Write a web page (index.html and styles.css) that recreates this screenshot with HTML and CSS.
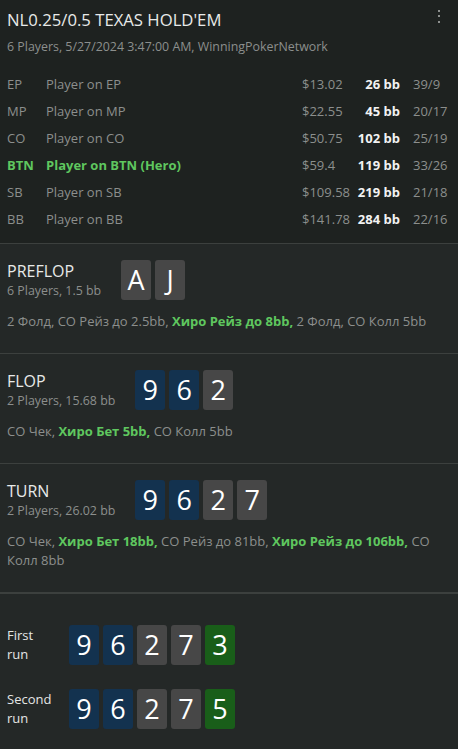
FILE: index.html
```html
<!DOCTYPE html>
<html lang="ru">
<head>
  <meta charset="UTF-8" />
  <meta name="viewport" content="width=device-width, initial-scale=1" />
  <title>NL0.25/0.5 Texas Hold'em</title>
  <link rel="stylesheet" href="styles.css">
</head>
<body>

  <header class="hand-head">
    <div class="title-row">
      <h1>NL0.25/0.5 TEXAS HOLD'EM</h1>
      <svg class="menu" width="6" height="16" viewBox="0 0 6 16">
        <rect x="2" y="2" width="2" height="2" fill="#8d908e"/>
        <rect x="2" y="7" width="2" height="2" fill="#8d908e"/>
        <rect x="2" y="13" width="2" height="2" fill="#8d908e"/>
      </svg>
    </div>
    <p class="meta">6 Players, 5/27/2024 3:47:00 AM, WinningPokerNetwork</p>

    <div class="players">
      <div class="player"><span>EP</span><span>Player on EP</span><span>$13.02</span><b>26 bb</b><span>39/9</span></div>
      <div class="player"><span>MP</span><span>Player on MP</span><span>$22.55</span><b>45 bb</b><span>20/17</span></div>
      <div class="player"><span>CO</span><span>Player on CO</span><span>$50.75</span><b>102 bb</b><span>25/19</span></div>
      <div class="player hero"><span>BTN</span><span>Player on BTN (Hero)</span><span>$59.4</span><b>119 bb</b><span>33/26</span></div>
      <div class="player"><span>SB</span><span>Player on SB</span><span>$109.58</span><b>219 bb</b><span>21/18</span></div>
      <div class="player"><span>BB</span><span>Player on BB</span><span>$141.78</span><b>284 bb</b><span>22/16</span></div>
    </div>
  </header>

  <section class="street">
    <div class="street-top">
      <div>
        <h2>PREFLOP</h2>
        <p class="meta">6 Players, 1.5 bb</p>
      </div>
      <div class="cards">
        <span class="card">A</span><span class="card">J</span>
      </div>
    </div>
    <p class="actions">2 Фолд, CO Рейз до 2.5bb, <b class="hero-act">Хиро Рейз до 8bb,</b> 2 Фолд, CO Колл 5bb</p>
  </section>

  <section class="street">
    <div class="street-top">
      <div>
        <h2>FLOP</h2>
        <p class="meta">2 Players, 15.68 bb</p>
      </div>
      <div class="cards">
        <span class="card blue">9</span><span class="card blue">6</span><span class="card">2</span>
      </div>
    </div>
    <p class="actions">CO Чек, <b class="hero-act">Хиро Бет 5bb,</b> CO Колл 5bb</p>
  </section>

  <section class="street">
    <div class="street-top">
      <div>
        <h2>TURN</h2>
        <p class="meta">2 Players, 26.02 bb</p>
      </div>
      <div class="cards">
        <span class="card blue">9</span><span class="card blue">6</span><span class="card">2</span><span class="card">7</span>
      </div>
    </div>
    <p class="actions">CO Чек, <b class="hero-act">Хиро Бет 18bb,</b> CO Рейз до 81bb, <b class="hero-act">Хиро Рейз до 106bb,</b> CO Колл 8bb</p>
  </section>

  <section class="runs">
    <div class="run">
      <span class="run-label">First<br>run</span>
      <div class="cards">
        <span class="card blue">9</span><span class="card blue">6</span><span class="card">2</span><span class="card">7</span><span class="card green">3</span>
      </div>
    </div>
    <div class="run">
      <span class="run-label">Second<br>run</span>
      <div class="cards">
        <span class="card blue">9</span><span class="card blue">6</span><span class="card">2</span><span class="card">7</span><span class="card green">5</span>
      </div>
    </div>
  </section>

</body>
</html>
```

FILE: styles.css
```css
body {
  margin: 0;
  min-height: 749px;
  background: #242827;
  color: #e4e6e5;
  font-family: "Open Sans", "Liberation Sans", sans-serif;
  font-size: 13px;
}

p, h1, h2 {
  margin: 0;
}

.hand-head {
  background: #1e2220;
  padding: 8px 7px 11px;
  border-bottom: 1px solid #3c403e;
}

.title-row {
  display: flex;
  justify-content: space-between;
  align-items: flex-start;
}

h1 {
  font-size: 16.7px;
  font-weight: normal;
  line-height: 24px;
  color: #e8eae9;
}

.menu {
  margin: 0 9px 0 0;
}

.meta {
  color: #8c8f8d;
  line-height: 18px;
  font-size: 12.4px;
}

.hand-head > .meta {
  margin-top: 6px;
}

.players {
  margin-top: 14px;
}

.player {
  display: grid;
  grid-template-columns: 39px 1fr 52px 46px 51px;
  height: 27px;
  align-items: center;
  color: #8c8f8d;
  white-space: nowrap;
}

.player b {
  color: #f2f2f2;
  text-align: right;
}

.player span:last-child {
  padding-left: 13px;
}

.player.hero span:nth-child(1),
.player.hero span:nth-child(2) {
  color: #5fc75f;
  font-weight: bold;
}

.street {
  padding: 16px 7px 22px;
  border-bottom: 1px solid #3c403e;
}

.street-top {
  display: flex;
  align-items: center;
  gap: 20px;
}

h2 {
  font-size: 16px;
  font-weight: normal;
  line-height: 22px;
  color: #e8eae9;
}

.cards {
  display: flex;
  gap: 4px;
}

.card {
  width: 30px;
  height: 40px;
  border-radius: 3px;
  background: #474747;
  color: #fff;
  font-size: 27px;
  line-height: 40px;
  text-align: center;
}

.card.blue {
  background: #13324f;
}

.card.green {
  background: #195e19;
}

.actions {
  margin-top: 12px;
  line-height: 19px;
  color: #8c8f8d;
}

.hero-act {
  color: #5fc75f;
}

.runs {
  border-top: 1px solid #3c403e;
  padding: 31px 7px 17px;
  display: flex;
  flex-direction: column;
  gap: 24px;
}

.run {
  display: flex;
  align-items: center;
}

.run-label {
  width: 62px;
  line-height: 19px;
  color: #e4e6e5;
}
```
